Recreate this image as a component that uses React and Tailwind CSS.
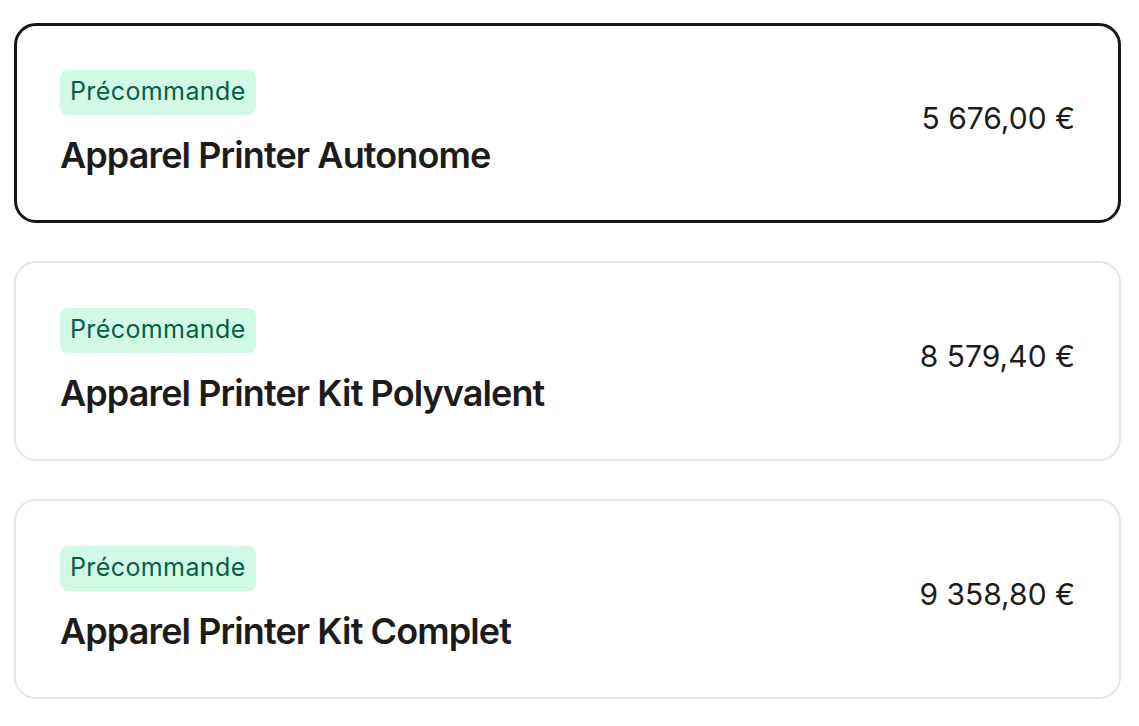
import React from "react";

const products = [
  { name: "Apparel Printer Autonome", price: "5 676,00 €", selected: true },
  { name: "Apparel Printer Kit Polyvalent", price: "8 579,40 €" },
  { name: "Apparel Printer Kit Complet", price: "9 358,80 €" },
];

const App = () => {
  return (
    <main
      className="min-h-screen bg-white pl-[14px] pr-[18px] pt-[23px] flex flex-col gap-[38px]"
      style={{ fontFamily: "Inter, 'Noto Sans', sans-serif" }}
    >
      {products.map((p) => (
        <div
          key={p.name}
          className={
            p.selected
              ? "h-[200px] rounded-[22px] border-[3px] border-[#171717] px-[43px] flex items-center justify-between"
              : "h-[200px] rounded-[22px] border-2 border-[#e5e5e5] px-[44px] flex items-center justify-between"
          }
        >
          <div className="flex flex-col items-start gap-[18px]">
            <span className="rounded-[8px] bg-[#d1fae5] px-[10px] h-[45px] flex items-center text-[25px] tracking-[0.4px] text-[#065f46]">
              Précommande
            </span>
            <h3 className="text-[36px] font-semibold leading-[44px] tracking-[-0.9px] text-[#1c1c1c]">
              {p.name}
            </h3>
          </div>
          <div className="text-[30px] text-[#1c1c1c] -mt-[10px]">{p.price}</div>
        </div>
      ))}
    </main>
  );
};

export default App;
